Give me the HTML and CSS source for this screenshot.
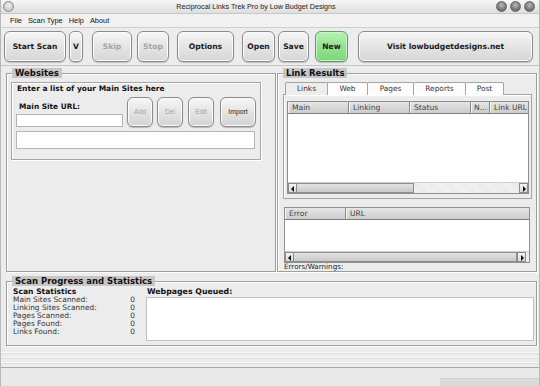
FILE: index.html
```html
<!DOCTYPE html>
<html>
<head>
<meta charset="utf-8">
<link rel="stylesheet" href="styles.css">
</head>
<body>
<div class="window">
  <div class="titlebar">
    <span class="orb orb-left"></span>
    <span class="title">Reciprocal Links Trek Pro by Low Budget Designs</span>
    <span class="orbs"><span class="orb"></span><span class="orb"></span><span class="orb"></span></span>
  </div>
  <div class="menubar">
    <span class="m-file">File</span><span class="m-scan">Scan Type</span><span class="m-help">Help</span><span class="m-about">About</span>
  </div>
  <div class="toolbar">
    <div class="btn b-start">Start Scan</div>
    <div class="btn b-v">V</div>
    <div class="btn b-skip dis">Skip</div>
    <div class="btn b-stop dis">Stop</div>
    <div class="btn b-options">Options</div>
    <div class="btn b-open">Open</div>
    <div class="btn b-save">Save</div>
    <div class="btn b-new">New</div>
    <div class="btn b-visit">Visit lowbudgetdesigns.net</div>
  </div>
  <div class="main">
    <div class="group g-sites">
      <div class="glabel">Websites</div>
      <div class="inner">
        <div class="hint">Enter a list of your Main Sites here</div>
        <div class="url-row">
          <div class="url-col">
            <div class="url-label">Main Site URL:</div>
            <div class="input"></div>
          </div>
          <div class="sbtn dis s-add">Add</div>
          <div class="sbtn dis s-del">Del</div>
          <div class="sbtn dis s-edit">Edit</div>
          <div class="sbtn s-import">Import</div>
        </div>
        <div class="textarea"></div>
      </div>
    </div>
    <div class="group g-results">
      <div class="glabel">Link Results</div>
      <div class="tabs">
        <div class="tab active t-links">Links</div>
        <div class="tab t-web">Web</div>
        <div class="tab t-pages">Pages</div>
        <div class="tab t-reports">Reports</div>
        <div class="tab t-post">Post</div>
      </div>
      <div class="tabpanel">
        <div class="grid g-links">
          <div class="ghead">
            <div class="col c-main">Main</div>
            <div class="col c-linking">Linking</div>
            <div class="col c-status">Status</div>
            <div class="col c-n">N...</div>
            <div class="col c-url">Link URL</div>
          </div>
          <div class="gbody"></div>
          <div class="hscroll">
            <div class="arrow left"></div>
            <div class="thumb t-half"></div>
            <div class="track"></div>
            <div class="arrow right"></div>
          </div>
        </div>
      </div>
      <div class="grid g-errors">
        <div class="ghead">
          <div class="col c-error">Error</div>
          <div class="col c-eurl">URL</div>
        </div>
        <div class="gbody"></div>
        <div class="hscroll">
          <div class="arrow left"></div>
          <div class="thumb t-full"></div>
          <div class="arrow right"></div>
          <div class="corner"></div>
        </div>
      </div>
      <div class="errors-label">Errors/Warnings:</div>
    </div>
  </div>
  <div class="group g-progress">
    <div class="glabel">Scan Progress and Statistics</div>
    <div class="prog-row">
      <div class="stats">
        <div class="stats-title">Scan Statistics</div>
        <div class="stat"><span>Main Sites Scanned:</span><span>0</span></div>
        <div class="stat"><span>Linking Sites Scanned:</span><span>0</span></div>
        <div class="stat"><span>Pages Scanned:</span><span>0</span></div>
        <div class="stat"><span>Pages Found:</span><span>0</span></div>
        <div class="stat"><span>Links Found:</span><span>0</span></div>
      </div>
      <div class="queue">
        <div class="queue-title">Webpages Queued:</div>
        <div class="queue-box"></div>
      </div>
    </div>
  </div>
  <div class="filler">
    <div class="fl"></div><div class="fl"></div><div class="fl"></div>
  </div>
  <div class="statusbar">
    <div class="grip"></div>
  </div>
</div>
</body>
</html>
```

FILE: styles.css
```css
* { box-sizing: border-box; }
html, body { margin: 0; padding: 0; }
body {
  width: 540px;
  height: 386px;
  overflow: hidden;
  background: #ececec;
  font-family: "DejaVu Sans", sans-serif;
  font-size: 7px;
  line-height: 8px;
  color: #111;
}
.window {
  width: 540px;
  height: 386px;
  display: flex;
  flex-direction: column;
  background: #ececec;
  border-left: 1px solid #b8b8b8;
  border-right: 1px solid #b8b8b8;
}

/* title bar */
.titlebar {
  height: 14px;
  display: flex;
  align-items: center;
  background: linear-gradient(#f6f6f6, #dedede);
  border-bottom: 1px solid #c8c8c8;
  padding: 0 4px 0 2px;
}
.title {
  flex: 1;
  text-align: center;
  font-family: "Liberation Sans", sans-serif;
  font-size: 7.2px;
  color: #222;
  padding-left: 2px;
}
.orb {
  width: 11px;
  height: 11px;
  border-radius: 50%;
  display: inline-block;
  background: radial-gradient(circle at 50% 35%, #b8b8b8, #6e6e6e 70%, #555);
  border: 1px solid #666;
}
.orb-left {
  background: radial-gradient(circle at 50% 40%, #f2f2f2, #c9c9c9 70%);
  border: 1px solid #8a8a8a;
}
.orbs { display: flex; gap: 3px; }

/* menu */
.menubar {
  height: 14px;
  display: flex;
  align-items: center;
  font-family: "Liberation Sans", sans-serif;
  font-size: 7.4px;
  color: #111;
  background: #f1f1f1;
  border-bottom: 1px solid #cfcfcf;
  padding-left: 9px;
}
.menubar span { margin-right: 6px; }

/* toolbar */
.toolbar {
  height: 38px;
  display: flex;
  align-items: flex-start;
  padding: 3px 0 0 3px;
  border-bottom: 1px solid #c4c4c4;
}
.btn {
  height: 31px;
  display: flex;
  align-items: center;
  justify-content: center;
  font-size: 7.6px;
  font-weight: bold;
  color: #1a1a1a;
  border: 1px solid #8c8c8c;
  border-radius: 6px;
  background: linear-gradient(#f7f7f7 0%, #e6e6e6 45%, #d6d6d6 100%);
  box-shadow: inset 0 0 0 1px #fbfbfb, 0 1px 1px #bdbdbd;
  flex: none;
}
.btn.dis, .sbtn.dis { color: #a4a4a4; }
.b-start { width: 62px; }
.b-v { width: 14px; margin-left: 3px; border-radius: 5px; }
.b-skip { width: 40px; margin-left: 9px; }
.b-stop { width: 32px; margin-left: 5px; }
.b-options { width: 57px; margin-left: 8px; }
.b-open { width: 33px; margin-left: 8px; }
.b-save { width: 31px; margin-left: 3px; }
.b-new {
  width: 33px;
  margin-left: 6px;
  background: linear-gradient(#b9f0b6 0%, #95e291 50%, #7fd57a 100%);
  border-color: #5f9f5c;
  box-shadow: inset 0 0 0 1px #c8f5c6, 0 1px 1px #bdbdbd;
}
.b-visit { width: 175px; margin-left: 10px; }

/* main */
.main {
  height: 205px;
  display: grid;
  grid-template-columns: 276px 262px;
  padding-top: 7px;
}
.group {
  border: 1px solid #9e9e9e;
  box-shadow: inset 1px 1px 0 #ffffff, 1px 1px 0 #ffffff;
}
.glabel {
  display: block;
  width: max-content;
  background: #c6c6c6;
  font-weight: bold;
  font-size: 8.5px;
  line-height: 10px;
  height: 10px;
  padding: 0 3px;
  margin: -6px 0 0 1px;
  color: #111;
}
.g-sites {
  margin: 0 1px 2px 5px;
  padding: 0 14px 0 4px;
}
.inner {
  margin-top: 4px;
  height: 78px;
  border: 1px solid #a6a6a6;
  box-shadow: inset 1px 1px 0 #ffffff, 1px 1px 0 #ffffff;
  padding: 1px 4px 0 4px;
}
.hint {
  font-size: 7.5px;
  font-weight: bold;
  line-height: 9px;
  padding-left: 1px;
}
.url-row {
  display: flex;
  align-items: flex-end;
  margin-top: 4px;
  height: 30px;
}
.url-col {
  width: 107px;
  display: flex;
  flex-direction: column;
}
.url-label {
  font-size: 7.4px;
  font-weight: bold;
  line-height: 9px;
  padding-left: 3px;
  margin-bottom: 3px;
}
.input {
  height: 13px;
  background: #fff;
  border: 1px solid #b4b4b4;
}
.sbtn {
  height: 30px;
  width: 26px;
  display: flex;
  align-items: center;
  justify-content: center;
  font-family: "Liberation Sans", sans-serif;
  font-size: 6.8px;
  color: #222;
  border: 1px solid #8c8c8c;
  border-radius: 6px;
  background: linear-gradient(#f7f7f7 0%, #e4e4e4 50%, #d3d3d3 100%);
  box-shadow: inset 0 0 0 1px #fbfbfb, 0 1px 1px #b8b8b8;
}
.s-add { margin-left: 4px; }
.s-del { margin-left: 4px; }
.s-edit { margin-left: 5px; }
.s-import { margin-left: 6px; width: 36px; }
.textarea {
  margin-top: 4px;
  height: 18px;
  width: 239px;
  background: #fff;
  border: 1px solid #b4b4b4;
}

.g-results {
  margin: 0 2px 2px 0;
  padding: 0 4px 0 5px;
}
.g-results .glabel { margin-left: 0; }
.tabs {
  display: flex;
  margin: 4px 0 0 2px;
  height: 13px;
}
.tab {
  height: 13px;
  font-size: 7.4px;
  line-height: 12px;
  text-align: center;
  color: #333;
  background: #fdfdfd;
  border: 1px solid #a4a4a4;
  border-bottom: none;
  border-radius: 2px 2px 0 0;
  margin-right: -1px;
}
.tab.active { background: #ededed; }
.t-links { width: 43px; }
.t-web { width: 41px; }
.t-pages { width: 47px; }
.t-reports { width: 53px; }
.t-post { width: 39px; }
.tabpanel {
  height: 105px;
  margin-top: -1px;
  border: 1px solid #a4a4a4;
  box-shadow: inset 1px 1px 0 #fff;
  padding: 6px 2px 0 3px;
}
.grid {
  border: 1px solid #8f8f8f;
  background: #fff;
  display: flex;
  flex-direction: column;
}
.g-links { height: 93px; }
.ghead {
  height: 12px;
  display: flex;
  background: linear-gradient(#e4e4e4, #cdcdcd);
  border-bottom: 1px solid #7d7d7d;
}
.col {
  font-size: 7.6px;
  line-height: 11px;
  color: #444;
  padding-left: 4px;
  border-right: 1px solid #8a8a8a;
  box-shadow: inset 1px 0 0 #f4f4f4;
  white-space: nowrap;
  overflow: hidden;
}
.c-main { width: 61px; }
.c-linking { width: 61px; }
.c-status { width: 61px; }
.c-n { width: 19px; padding-left: 3px; }
.c-url { flex: 1; border-right: none; }
.gbody { flex: 1; background: #fff; }
.hscroll {
  height: 11px;
  display: flex;
  background: repeating-linear-gradient(45deg, #e9e9e9 0 1px, #f3f3f3 1px 2px);
  border-top: 1px solid #cfcfcf;
}
.arrow {
  width: 9px;
  height: 10px;
  background: linear-gradient(#f3f3f3, #d8d8d8);
  border: 1px solid #8a8a8a;
  position: relative;
  flex: none;
}
.arrow::after {
  content: "";
  position: absolute;
  top: 2px;
  border-top: 3px solid transparent;
  border-bottom: 3px solid transparent;
}
.arrow.left::after { left: 2px; border-right: 3px solid #111; }
.arrow.right::after { left: 3px; border-left: 3px solid #111; }
.thumb {
  height: 10px;
  background: linear-gradient(#e2e2e2, #c9c9c9);
  border: 1px solid #8d8d8d;
  border-left: none;
}
.t-half { width: 117px; }
.track { flex: 1; }
.t-full { flex: 1; border-left: none; }
.corner { width: 3px; background: #ececec; }

.g-errors {
  margin: 8px 2px 0 1px;
  height: 56px;
}
.c-error { width: 61px; }
.c-eurl { flex: 1; border-right: none; }
.errors-label {
  font-size: 7.2px;
  line-height: 8px;
  margin-top: 0;
  padding-left: 1px;
  color: #222;
}

/* progress */
.g-progress {
  margin: 10px 2px 0 5px;
  height: 65px;
  padding: 0 2px 0 6px;
}
.g-progress .glabel { margin-left: -1px; }
.prog-row {
  display: flex;
  margin-top: 2px;
}
.stats {
  width: 133px;
}
.stats-title {
  font-size: 7.6px;
  font-weight: bold;
  line-height: 8px;
}
.stat {
  display: flex;
  justify-content: space-between;
  font-size: 7.4px;
  line-height: 8px;
  color: #333;
  padding-right: 11px;
}
.queue { flex: 1; }
.queue-title {
  font-size: 7.8px;
  font-weight: bold;
  line-height: 8px;
  padding-left: 1px;
}
.queue-box {
  height: 44px;
  background: #fff;
  border: 1px solid #c2c2c2;
  margin-top: 1px;
}

.filler {
  flex: 1;
  display: flex;
  flex-direction: column;
  padding-top: 2px;
}
.fl {
  height: 5px;
  border-bottom: 1px solid #f8f8f8;
  box-shadow: 0 1px 0 #dedede;
}
.statusbar {
  height: 19px;
  border-top: 1px solid #a8a8a8;
  background: #e9e9e9;
  display: flex;
  justify-content: flex-end;
  align-items: flex-end;
}
.grip {
  width: 99px;
  height: 8px;
  background: #dadada;
  border-top: 1px solid #cfcfcf;
}
```
